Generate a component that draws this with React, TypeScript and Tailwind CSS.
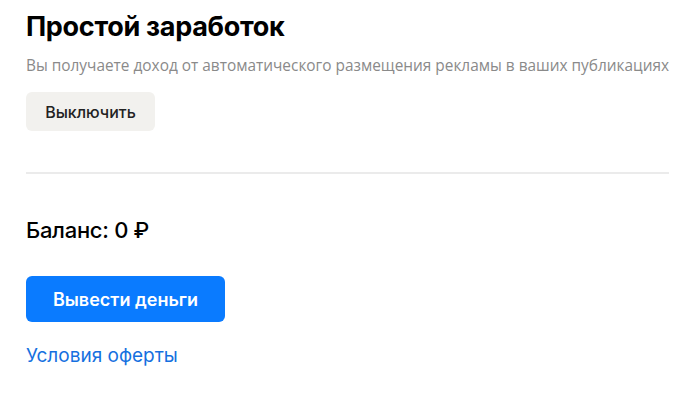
export default function App() {
  return (
    <div className="min-h-screen w-[695px] bg-white pl-[26px] pr-[26px] pt-[10px]" style={{ fontFamily: 'Inter, "Noto Sans", sans-serif' }}>
      <h1 className="text-[27px] font-bold leading-[34px] text-black tracking-[-0.3px]">Простой заработок</h1>
      <p className="mt-[12px] whitespace-nowrap text-[15.4px] leading-[20px] text-[#8a8a8a]" style={{ fontFamily: '"Open Sans", sans-serif' }}>
        Вы получаете доход от автоматического размещения рекламы в ваших публикациях
      </p>
      <button
        type="button"
        className="mt-[16px] h-[39px] w-[129px] rounded-[6px] bg-[#f2f1ee] text-[16px] font-medium text-[#222]"
      >
        Выключить
      </button>
      <div className="mt-[41px] h-[2px] w-[643px] bg-[#ebebeb]" />
      <div className="mt-[42px] text-[22px] font-medium leading-[28px] tracking-[-0.3px] text-black">Баланс: 0 ₽</div>
      <button
        type="button"
        className="mt-[32px] h-[46px] w-[199px] rounded-[6px] bg-[#0a7bff] text-[18px] font-semibold text-white"
      >
        Вывести деньги
      </button>
      <div className="mt-[22px]">
        <a href="#" className="text-[19px] leading-[24px] text-[#1570e0]">Условия оферты</a>
      </div>
    </div>
  )
}
